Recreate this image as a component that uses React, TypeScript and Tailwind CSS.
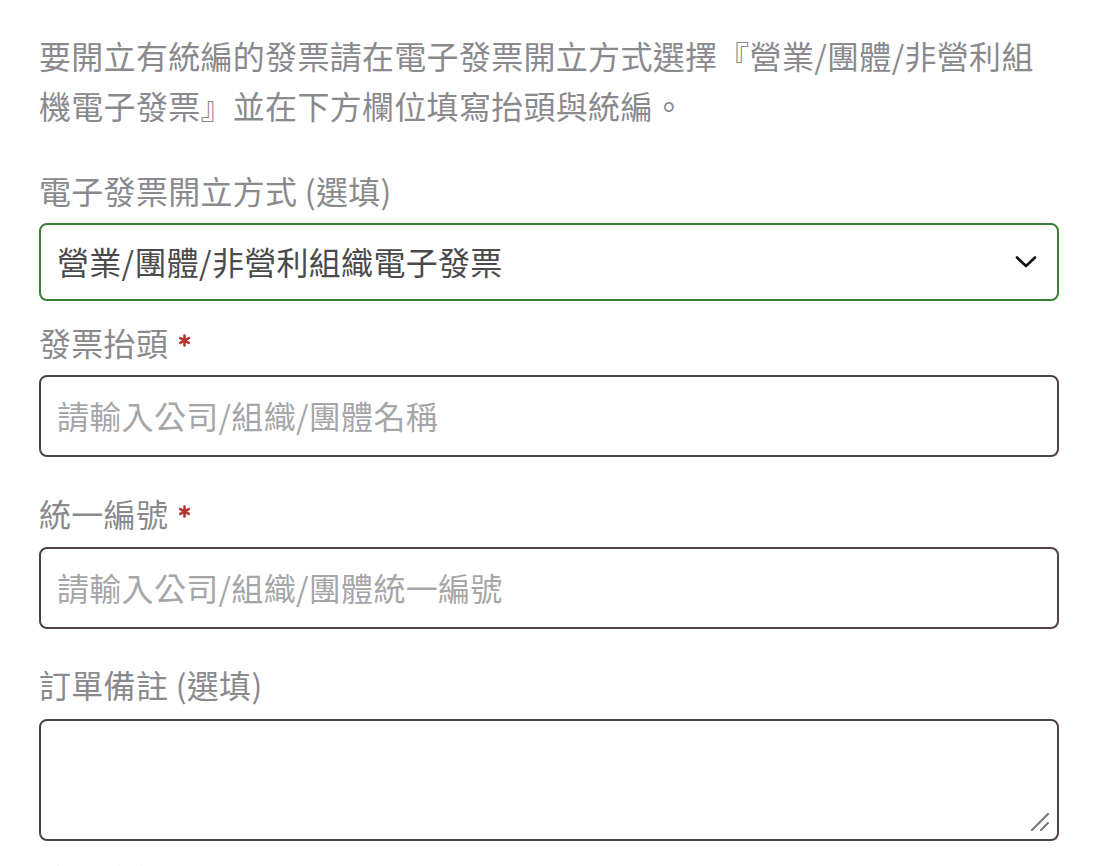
import React from "react";

const font = { fontFamily: '"Noto Sans CJK TC", "Noto Sans", sans-serif' };

function Label({ text, required }: { text: string; required?: boolean }) {
  return (
    <div className="text-[32px] leading-[48px] tracking-[0.3px] text-[#8a8a8e] flex items-center">
      <span>{text}</span>
      {required && (
        <svg className="ml-[10px] -mt-[4px]" width="13" height="13" viewBox="0 0 12 12">
          <g stroke="#b3372f" strokeWidth="2.4" strokeLinecap="round">
            <line x1="6" y1="1.5" x2="6" y2="10.5" />
            <line x1="2.1" y1="3.75" x2="9.9" y2="8.25" />
            <line x1="2.1" y1="8.25" x2="9.9" y2="3.75" />
          </g>
        </svg>
      )}
    </div>
  );
}

export default function App() {
  return (
    <div
      className="w-[1108px] h-[866px] overflow-hidden bg-white pl-[39px] pr-[49px] pt-[30px]"
      style={font}
    >
      <p className="text-[32px] leading-[50px] tracking-[0.3px] text-[#8a8a8e]">
        要開立有統編的發票請在電子發票開立方式選擇『營業/團體/非營利組機電子發票』並在下方欄位填寫抬頭與統編。
      </p>

      <div className="mt-[36px]">
        <Label text="電子發票開立方式 (選填)" />
      </div>
      <div className="mt-[9px] h-[78px] rounded-[8px] border-2 border-[#3d7f37] flex items-center justify-between pl-[16px] pr-[20px]">
        <span className="text-[32px] tracking-[0.3px] text-[#4a4a4c] leading-none pb-[3px]">
          營業/團體/非營利組織電子發票
        </span>
        <svg width="22" height="14" viewBox="0 0 22 14" fill="none">
          <path d="M2 2.5 L11 11 L20 2.5" stroke="#111" strokeWidth="2.6" strokeLinecap="round" strokeLinejoin="round" />
        </svg>
      </div>

      <div className="mt-[17px]">
        <Label text="發票抬頭" required />
      </div>
      <div className="mt-[9px] h-[82px] rounded-[8px] border-2 border-[#4e4343] flex items-center pl-[16px]">
        <span className="text-[32px] tracking-[0.3px] text-[#a6a6a8] leading-none pb-[2px]">請輸入公司/組織/團體名稱</span>
      </div>

      <div className="mt-[32px]">
        <Label text="統一編號" required />
      </div>
      <div className="mt-[10px] h-[82px] rounded-[8px] border-2 border-[#4e4343] flex items-center pl-[16px]">
        <span className="text-[32px] tracking-[0.3px] text-[#a6a6a8] leading-none pb-[2px]">請輸入公司/組織/團體統一編號</span>
      </div>

      <div className="mt-[31px]">
        <Label text="訂單備註 (選填)" />
      </div>
      <div className="relative mt-[11px]">
        <textarea
          className="block w-full h-[122px] rounded-[8px] border-2 border-[#4e4343] resize-none outline-none p-[16px] text-[32px]"
          style={font}
        />
        <svg className="absolute right-[9px] bottom-[9px]" width="20" height="20" viewBox="0 0 20 20">
          <g stroke="#7a7a7a" strokeWidth="2.2" strokeLinecap="round">
            <line x1="2" y1="18" x2="18" y2="2" />
            <line x1="11" y1="18" x2="18" y2="11" />
          </g>
        </svg>
      </div>

      <div className="mt-[14px] text-[32px] leading-[48px] text-[#8a8a8e]">收件資訊</div>
    </div>
  );
}
